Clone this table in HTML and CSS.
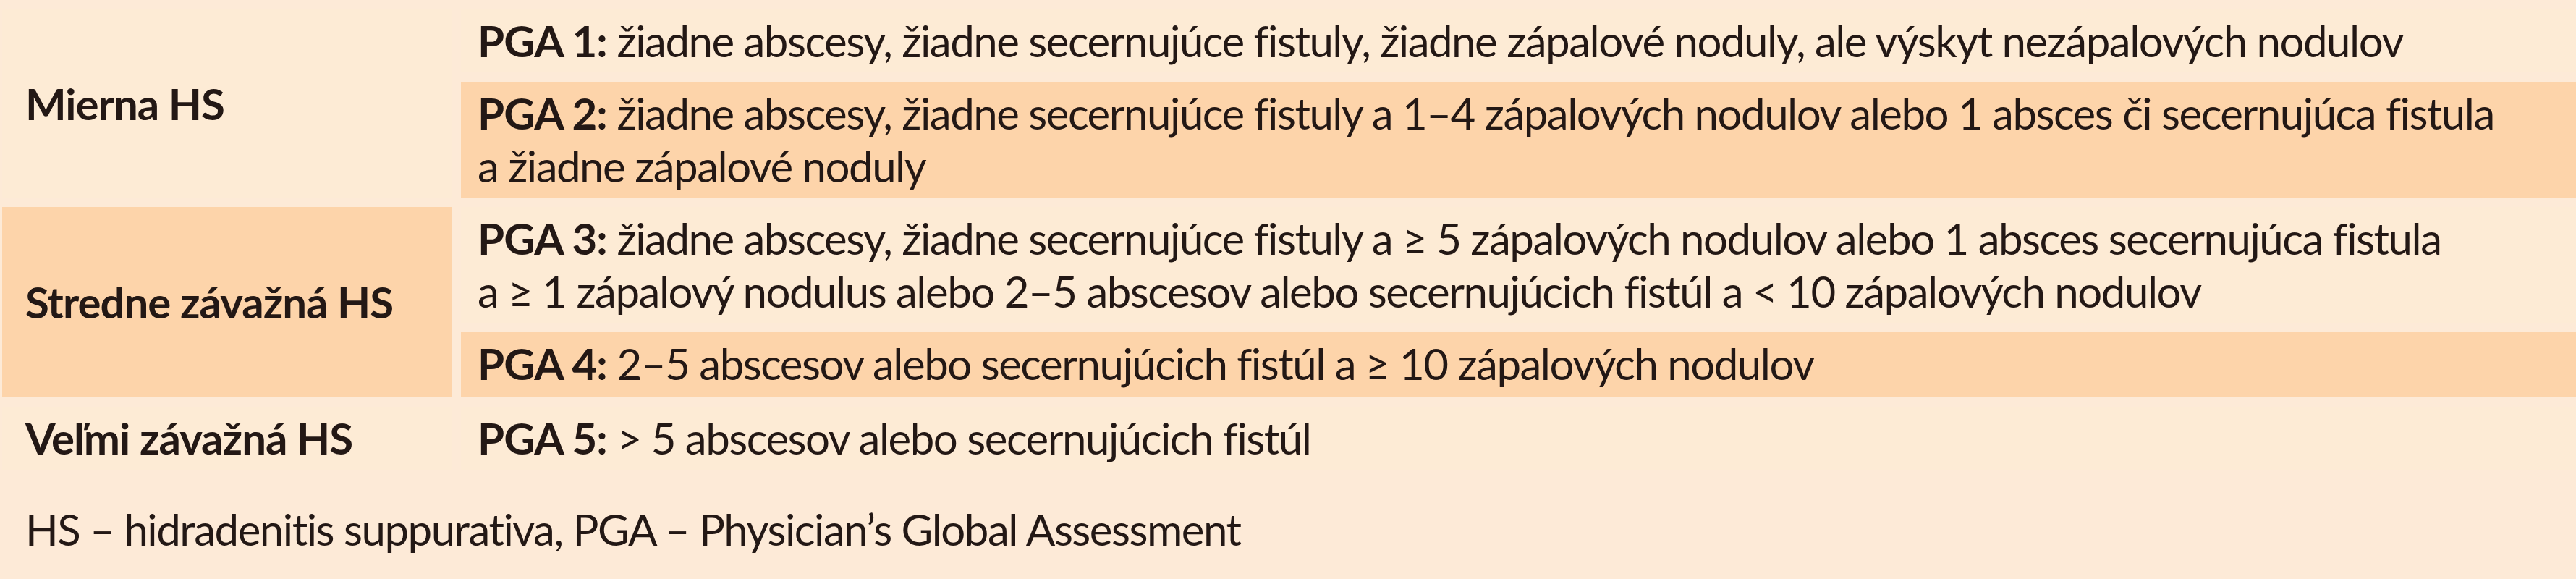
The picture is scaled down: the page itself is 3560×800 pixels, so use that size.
FILE: index.html
```html
<!DOCTYPE html>
<html lang="sk">
<head>
<meta charset="utf-8">
<title>PGA – hidradenitis suppurativa</title>
<link rel="stylesheet" href="styles.css">
</head>
<body>
<div class="table">
  <div class="cat cat-mild">Mierna HS</div>
  <div class="desc light"><b>PGA 1:</b> žiadne abscesy, žiadne secernujúce fistuly, žiadne zápalové noduly, ale výskyt nezápalových nodulov</div>
  <div class="desc dark"><b>PGA 2:</b> žiadne abscesy, žiadne secernujúce fistuly a 1–4 zápalových nodulov alebo 1 absces či secernujúca fistula<br>a žiadne zápalové noduly</div>

  <div class="cat cat-moderate dark">Stredne závažná HS</div>
  <div class="desc light"><b>PGA 3:</b> žiadne abscesy, žiadne secernujúce fistuly a ≥ 5 zápalových nodulov alebo 1 absces secernujúca fistula<br>a ≥ 1 zápalový nodulus alebo 2–5 abscesov alebo secernujúcich fistúl a &lt; 10 zápalových nodulov</div>
  <div class="desc dark tall"><b>PGA 4:</b> 2–5 abscesov alebo secernujúcich fistúl a ≥ 10 zápalových nodulov</div>

  <div class="cat cat-severe">Veľmi závažná HS</div>
  <div class="desc light"><b>PGA 5:</b> &gt; 5 abscesov alebo secernujúcich fistúl</div>
</div>
<p class="note">HS – hidradenitis suppurativa, PGA – Physician’s Global Assessment</p>
</body>
</html>
```
FILE: styles.css
```css
html, body {
  margin: 0;
  padding: 0;
}
body {
  background: #fdead7;
  color: #231815;
  font-family: "Lato", "Open Sans", sans-serif;
  font-size: 60px;
  line-height: 73px;
  letter-spacing: -1.5px;
  width: 3560px;
  height: 800px;
  overflow: hidden;
}
.table {
  display: grid;
  grid-template-columns: 621px 1fr;
  grid-template-rows: auto auto auto auto auto;
  column-gap: 13px;
  row-gap: 13px;
  padding: 13px 0 0 3px;
}
.cat,
.desc b {
  font-weight: 700;
  letter-spacing: -1px;
}
.cat {
  padding: 7px 0 7px 32px;
  display: flex;
  align-items: center;
  white-space: nowrap;
}
.cat-mild {
  grid-column: 1;
  grid-row: 1 / span 2;
  background: #fdebd5;
}
.cat-moderate {
  grid-column: 1;
  grid-row: 3 / span 2;
}
.cat-severe {
  grid-column: 1;
  grid-row: 5;
  align-items: flex-start;
  background: #fdebd5;
}
.desc {
  grid-column: 2;
  padding: 7px 0 7px 23px;
  white-space: nowrap;
}
.light {
  background: #fdebd5;
}
.dark {
  background: #fdd4aa;
}
.tall {
  padding-bottom: 10px;
}
.note {
  margin: 0;
  padding: 46px 0 0 35px;
  white-space: nowrap;
}
```
